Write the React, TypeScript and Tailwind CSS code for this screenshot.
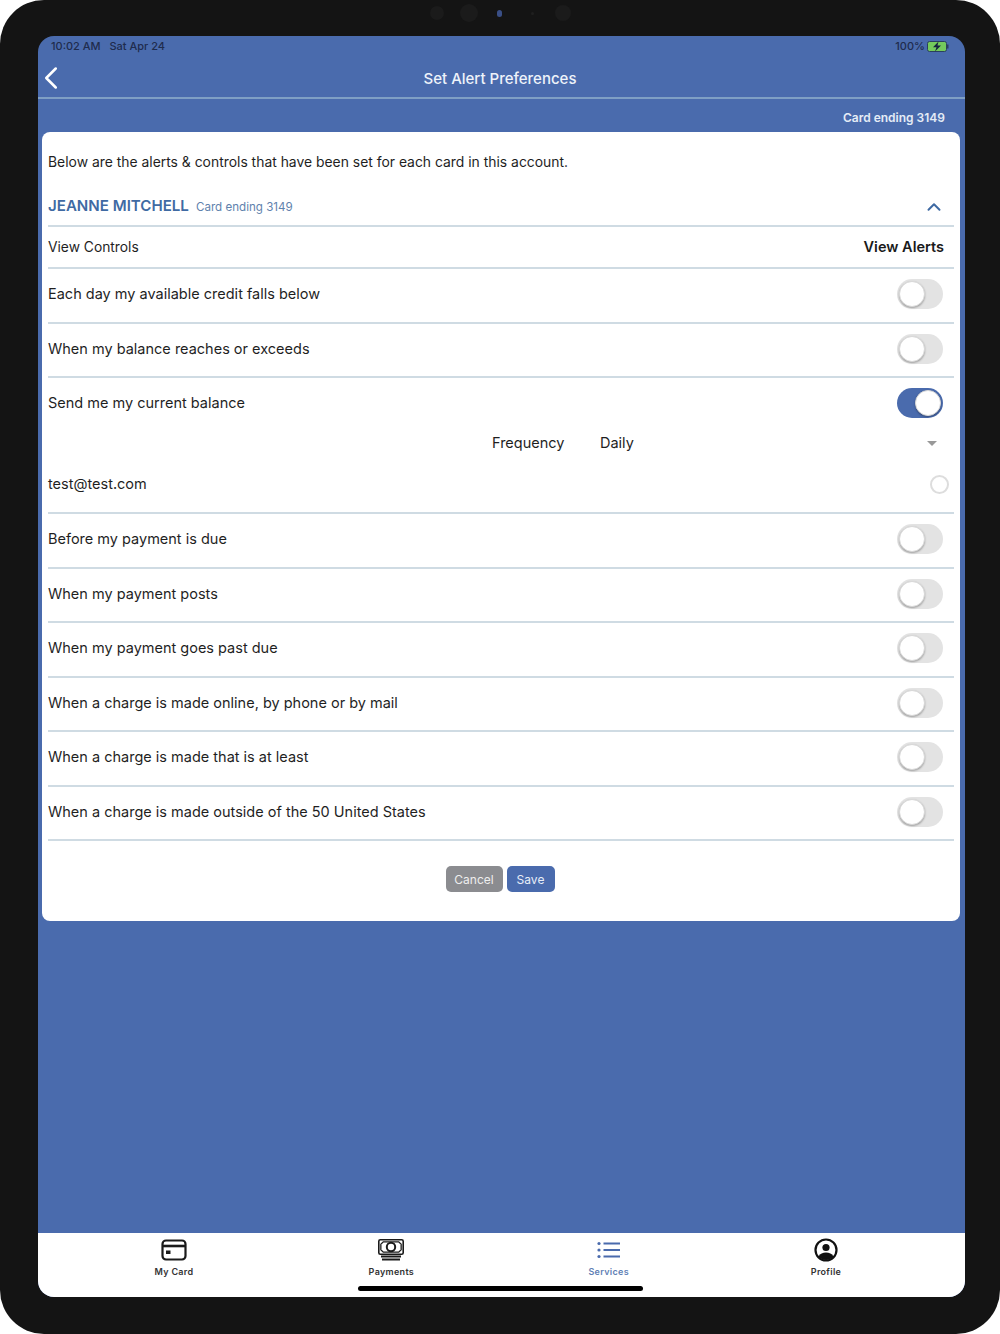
import { ChevronLeft, ChevronUp } from 'lucide-react';

const Toggle = ({ on = false }: { on?: boolean }) => (
  <div className={`flex h-[30px] w-[46px] items-center rounded-full p-[2px] ${on ? 'justify-end bg-[#4a6bad]' : 'justify-start bg-[#e3e3e3]'}`}>
    <div className="h-[26px] w-[26px] rounded-full border border-[#d8d8d8] bg-white shadow-[0_1px_2px_rgba(0,0,0,0.3)]" />
  </div>
);

const AlertRow = ({ label, on }: { label: string; on?: boolean }) => (
  <div className="flex h-[54.5px] items-center justify-between border-b-2 border-[#cfdbe3] pr-[11px] pb-[2px]">
    <span>{label}</span>
    <Toggle on={on} />
  </div>
);

const CardIcon = () => (
  <svg width="26" height="22" viewBox="0 0 26 22" fill="none" stroke="#1a1a1a" strokeWidth="2.2">
    <rect x="1.5" y="1.5" width="23" height="19" rx="3.5" />
    <path d="M1.5 7h23" strokeWidth="2.6" />
    <rect x="5" y="11.5" width="4.5" height="3.5" fill="#1a1a1a" stroke="none" />
  </svg>
);

const CashIcon = () => (
  <svg width="26" height="22" viewBox="0 0 26 22" fill="none">
    <rect x="0.8" y="0.8" width="24.4" height="14.4" rx="1.5" stroke="#1a1a1a" strokeWidth="1.6" />
    <path d="M2.2 5 5 2.2H21L23.8 5v6L21 13.8H5L2.2 11z" fill="#1a1a1a" />
    <path d="M5.5 3.6h15l2 2v4.800l-2 2h-15l-2-2V5.600z" fill="#fff" />
    <circle cx="13" cy="8" r="4.2" stroke="#1a1a1a" strokeWidth="2" />
    <path d="M3 17.500h20M4 20.500h18" stroke="#1a1a1a" strokeWidth="1.800" />
  </svg>
);

const ListIcon = () => (
  <svg width="24" height="20" viewBox="0 0 24 20" fill="none" stroke="#4a6bad" strokeWidth="2">
    <circle cx="2" cy="3.500" r="1.600" fill="#4a6bad" stroke="none" />
    <circle cx="2" cy="10" r="1.600" fill="#4a6bad" stroke="none" />
    <circle cx="2" cy="16.500" r="1.600" fill="#4a6bad" stroke="none" />
    <path d="M6.500 3.500H23M6.500 10H23M6.500 16.500H23" />
  </svg>
);

const ProfileIcon = () => (
  <svg width="24" height="24" viewBox="0 0 24 24">
    <circle cx="12" cy="12" r="10.500" fill="none" stroke="#111" strokeWidth="2.200" />
    <circle cx="12" cy="9.500" r="3.600" fill="#111" />
    <path d="M4.500 18.500c1.600-3 4.200-4 7.500-4s5.900 1 7.500 4A10 10 0 0 1 12 22a10 10 0 0 1-7.500-3.500z" fill="#111" />
  </svg>
);

const BatteryIcon = () => (
  <svg width="22" height="11" viewBox="0 0 22 11">
    <rect x="0.500" y="0.500" width="19" height="10" rx="2" fill="#74c95c" stroke="#2a3f5f" />
    <rect x="20" y="3.500" width="1.500" height="4" fill="#2a3f5f" />
    <path d="M11.500 0.500 6 6.200h3.500L8 10.500l6-6h-3.500z" fill="#16233f" />
  </svg>
);

const TabItem = ({ icon, label, active }: { icon: React.ReactNode; label: string; active?: boolean }) => (
  <div className="flex w-[120px] flex-col items-center">
    <div className="flex h-[26px] items-center">{icon}</div>
    <span className={`mt-[3px] text-[9px] leading-[12px] font-semibold tracking-[0.3px] ${active ? 'text-[#5f7fb5]' : 'text-[#333]'}`}>{label}</span>
  </div>
);

export default function App() {
  return (
    <div className="h-[1334px] w-[1000px] bg-white font-['Inter',sans-serif]">
      <div className="flex h-full flex-col rounded-[44px] bg-[#141414] pr-[35px] pb-[37px] pl-[38px]">
        <div className="mr-[3px] mb-[10px] flex h-[26px] items-center justify-center">
          <div className="h-[14px] w-[14px] rounded-full bg-[#1b1b1b]" />
          <div className="ml-[16px] h-[18px] w-[18px] rounded-full bg-[#1b1b1b]" />
          <div className="ml-[19px] h-[7px] w-[5px] rounded-full bg-[#3a4f86]" />
          <div className="ml-[29px] h-[3px] w-[3px] rounded-full bg-[#1f1f1f]" />
          <div className="ml-[21px] h-[16px] w-[16px] rounded-full bg-[#1b1b1b]" />
        </div>
        <div className="flex flex-1 flex-col overflow-hidden rounded-[16px] bg-[#4a6bad]">
          <div className="flex h-[20px] items-center justify-between pt-[1px] pr-[16px] pl-[13px] text-[11px] font-medium text-[#1f2c4d]">
            <span>10:02 AM&nbsp;&nbsp;&nbsp;Sat Apr 24</span>
            <div className="flex items-center gap-[2px]">
              <span>100%</span>
              <BatteryIcon />
            </div>
          </div>
          <div className="relative flex h-[43px] items-center justify-center border-b-2 border-[#7f9fc4] pt-[5px] pr-[3px] text-[15px] font-medium text-[#eef3fa]">
            <ChevronLeft className="absolute top-[3px] left-[-6px] text-white" size={38} strokeWidth={1.600} />
            Set Alert Preferences
          </div>
          <div className="flex h-[33px] items-center justify-end pt-[4px] pr-[20px] text-[12px] font-semibold text-[#e4ecf6]">Card ending 3149</div>
          <div className="mr-[5px] ml-[4px] h-[789px] rounded-[8px] bg-white px-[6px] text-[14.500px] text-[#1f1f1f]">
            <div className="flex h-[60px] items-center text-[13.900px]">Below are the alerts &amp; controls that have been set for each card in this account.</div>
            <div className="flex h-[35px] items-center justify-between border-b-2 border-[#cfdbe3] pr-[9px] pb-[4px]">
              <div className="flex items-baseline gap-[7px]">
                <span className="text-[15.100px] font-semibold text-[#3f6aa3]">JEANNE MITCHELL</span>
                <span className="text-[11.600px] text-[#5f82ad]">Card ending 3149</span>
              </div>
              <ChevronUp className="text-[#3f6aa3]" size={22} strokeWidth={2.200} />
            </div>
            <div className="flex h-[42px] items-center justify-between border-b-2 border-[#cfdbe3] pr-[10px]">
              <span className="text-[13.800px]">View Controls</span>
              <span className="font-semibold text-[#1a1a1a]">View Alerts</span>
            </div>
            <AlertRow label="Each day my available credit falls below" />
            <AlertRow label="When my balance reaches or exceeds" />
            <div className="border-b-2 border-[#cfdbe3] pr-[11px] pb-[2px]">
              <div className="flex h-[50px] items-center justify-between">
                <span>Send me my current balance</span>
                <Toggle on />
              </div>
              <div className="flex h-[30px] items-center">
                <span className="ml-[444px] w-[108px]">Frequency</span>
                <span className="flex-1">Daily</span>
                <div className="mr-[6px] h-0 w-0 border-x-[5px] border-t-[5px] border-x-transparent border-t-[#999]" />
              </div>
              <div className="flex h-[52px] items-center justify-between">
                <span>test@test.com</span>
                <div className="mr-[-6px] h-[19px] w-[19px] rounded-full border-2 border-[#ddd]" />
              </div>
            </div>
            <AlertRow label="Before my payment is due" />
            <AlertRow label="When my payment posts" />
            <AlertRow label="When my payment goes past due" />
            <AlertRow label="When a charge is made online, by phone or by mail" />
            <AlertRow label="When a charge is made that is at least" />
            <AlertRow label="When a charge is made outside of the 50 United States" />
            <div className="flex justify-center gap-[4px] pt-[25px] pr-[2px] text-[12px]">
              <button className="h-[26px] w-[57px] rounded-[5px] bg-[#8b8c90] pt-[1px] text-[#eee]">Cancel</button>
              <button className="h-[26px] w-[48px] rounded-[5px] bg-[#4a6bad] pt-[1px] text-[#e8eef8]">Save</button>
            </div>
          </div>
          <div className="flex-1" />
          <div className="relative flex h-[64px] justify-between bg-white pt-[4px] pr-[79px] pl-[76px]">
            <TabItem icon={<CardIcon />} label="My Card" />
            <TabItem icon={<CashIcon />} label="Payments" />
            <TabItem icon={<ListIcon />} label="Services" active />
            <TabItem icon={<ProfileIcon />} label="Profile" />
            <div className="absolute bottom-[6px] left-[320px] h-[5px] w-[285px] rounded-full bg-black" />
          </div>
        </div>
      </div>
    </div>
  );
}
